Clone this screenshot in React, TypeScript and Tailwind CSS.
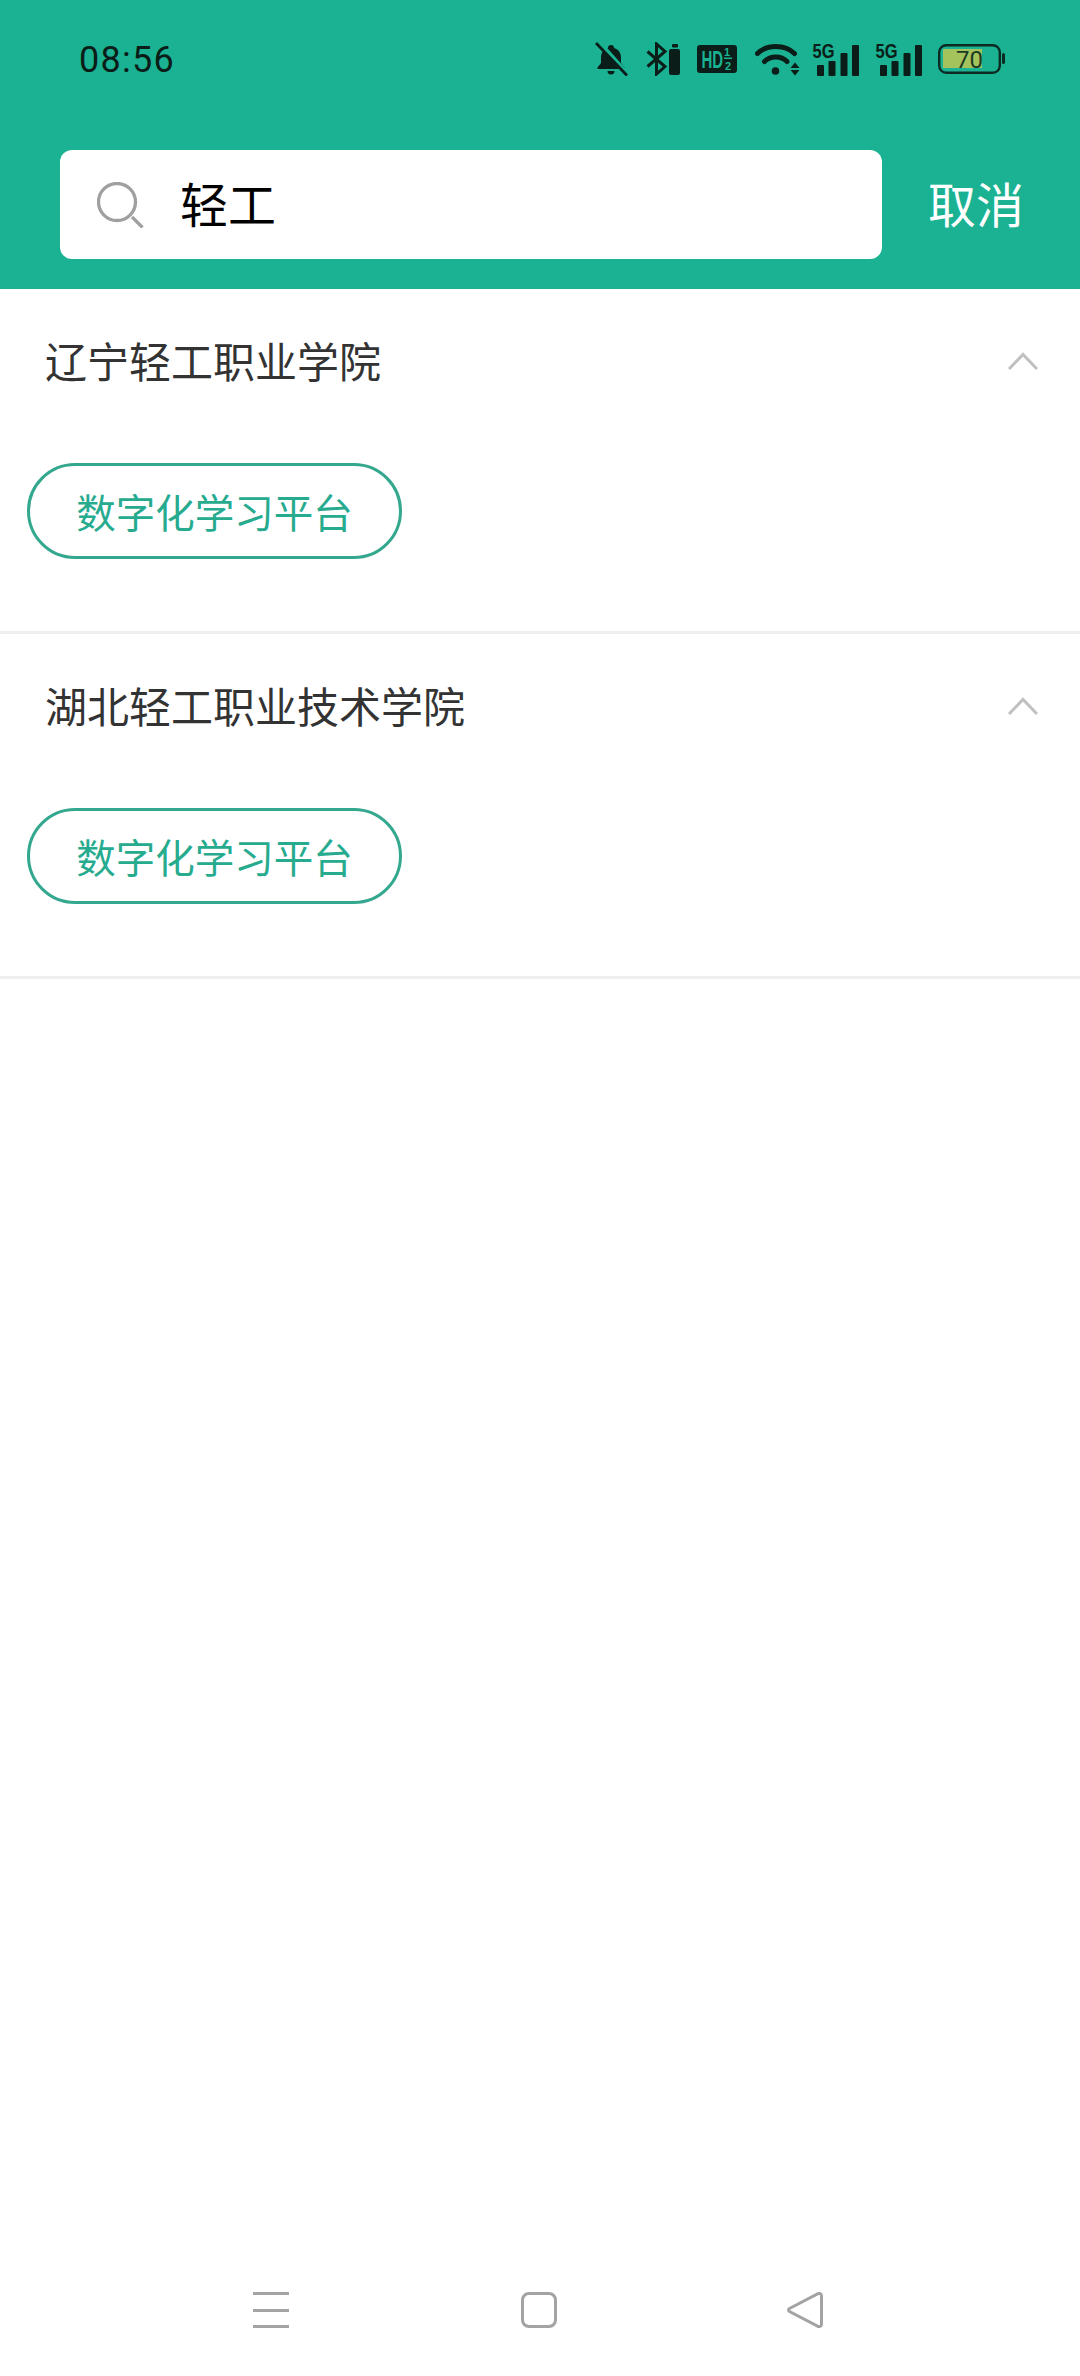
import React from "react";

const cjk = { fontFamily: '"Noto Sans CJK SC", "Noto Sans", sans-serif' };

function Bell() {
  return (
    <svg width="33" height="34" viewBox="0 0 33 34" className="block">
      <path d="M16 3a3 3 0 0 1 3 3c5 1.500 7 5 7 10v5l3.500 4.500V27H2.500v-1.500L6 21v-5c0-5 2-8.500 7-10a3 3 0 0 1 3-3z" fill="#0b1d18" />
      <path d="M12.500 29h7a3.500 3.500 0 0 1-7 0z" fill="#0b1d18" />
      <path d="M3.500 0L33 33" stroke="#1ab292" strokeWidth="5" />
      <path d="M1 1L32 33.500" stroke="#0b1d18" strokeWidth="2.800" />
    </svg>
  );
}

function BluetoothBattery() {
  return (
    <svg width="34" height="34" viewBox="0 0 34 34" className="block">
      <path d="M1.500 9.500L19 24.500l-8.500 7.500V2L19 9.500 1.500 24.500" fill="none" stroke="#0b1d18" strokeWidth="3" />
      <rect x="26" y="2" width="6" height="3.500" rx="1" fill="#0b1d18" />
      <rect x="23" y="7" width="11" height="26" rx="2" fill="#0b1d18" />
    </svg>
  );
}

function HD() {
  return (
    <svg width="40" height="28" viewBox="0 0 40 28" className="block overflow-visible">
      <rect x="0" y="0" width="40" height="28" rx="3" fill="#0b1d18" />
      <text transform="translate(4.500 23) scale(1 1.600)" fontFamily="Liberation Sans" fontWeight="700" fontSize="15" fill="#1ab292">HD</text>
      <text x="30" y="10.500" textAnchor="middle" fontFamily="Liberation Sans" fontWeight="700" fontSize="11" fill="#1ab292">1</text>
      <rect x="27" y="12.500" width="8" height="1.500" fill="#1ab292" />
      <text x="31" y="25" textAnchor="middle" fontFamily="Liberation Sans" fontWeight="700" fontSize="11" fill="#1ab292">2</text>
    </svg>
  );
}

function Wifi() {
  return (
    <svg width="45" height="34" viewBox="0 0 45 34" className="block">
      <path d="M2.500 11.500C12 2 30 2 39.500 11.500" fill="none" stroke="#0b1d18" strokeWidth="5" strokeLinecap="round" />
      <path d="M9.500 19.500C15.500 13.500 26 13.500 32 19.500" fill="none" stroke="#0b1d18" strokeWidth="5" strokeLinecap="round" />
      <circle cx="20.500" cy="29" r="3.800" fill="#0b1d18" />
      <path d="M35.500 26l4.500-5.500 4.500 5.500zM35.500 28h9L40 33.500z" fill="#0b1d18" />
    </svg>
  );
}

function Signal() {
  return (
    <svg width="48" height="33" viewBox="0 0 48 33" className="block overflow-visible">
      <text transform="translate(0.500 15) scale(1 1.270)" fontFamily="Liberation Sans" fontWeight="700" fontSize="16.500" fill="#0b1d18">5G</text>
      <rect x="5" y="22" width="7" height="11" rx="1" fill="#0b1d18" />
      <rect x="16.500" y="18" width="7" height="15" rx="1" fill="#0b1d18" />
      <rect x="28.500" y="10" width="7" height="23" rx="1" fill="#0b1d18" />
      <rect x="40" y="2" width="7" height="31" rx="1" fill="#0b1d18" />
    </svg>
  );
}

function Battery() {
  return (
    <svg width="67" height="30" viewBox="0 0 67 30" className="block overflow-visible">
      <rect x="5" y="5" width="39" height="19" fill="#a4c35d" />
      <rect x="1.200" y="1.200" width="60.600" height="27.600" rx="7" fill="none" stroke="#0b2a22" strokeWidth="2.400" />
      <rect x="64" y="9" width="3" height="11" rx="1.500" fill="#0b2a22" />
      <text x="18" y="24" fontFamily="Roboto" fontSize="24" fill="#1c3a24">70</text>
    </svg>
  );
}

function Chevron() {
  return (
    <svg width="30" height="18" viewBox="0 0 30 18" className="mt-[2px] block">
      <path d="M1 17L15 2.500 29 17" fill="none" stroke="#c0c0c0" strokeWidth="3" />
    </svg>
  );
}

function School({ name }: { name: string }) {
  return (
    <section className="h-[345px] border-b-[3px] border-[#eeeeee] bg-white">
      <div className="flex h-[142px] items-center justify-between pl-[45px] pr-[42px]">
        <h2 className="text-[42px] leading-[56px] font-normal text-[#333333]">{name}</h2>
        <Chevron />
      </div>
      <div className="pl-[27px] pt-[32px]">
        <div className="flex h-[96px] w-[375px] items-center justify-center rounded-[48px] border-[3px] border-[#33a88e] text-[39.500px] leading-[52px] text-[#27ab8f]">
          数字化学习平台
        </div>
      </div>
    </section>
  );
}

export default function App() {
  return (
    <div className="flex min-h-screen flex-col bg-white" style={cjk}>
      <header className="h-[289px] bg-[#1ab292]">
        <div className="flex h-[150px] items-start justify-between pl-[79px] pr-[75px] pt-[42px]">
          <span className="text-[36px] leading-[36px] text-[#0b1d18] font-['Roboto',sans-serif] tracking-[1.3px]">08:56</span>
          <div className="flex items-center">
            <div className="mr-[18px]"><Bell /></div>
            <div className="mr-[17px]"><BluetoothBattery /></div>
            <div className="mr-[18px]"><HD /></div>
            <div className="mr-[12px]"><Wifi /></div>
            <div className="mr-[15px]"><Signal /></div>
            <div className="mr-[15px]"><Signal /></div>
            <Battery />
          </div>
        </div>
        <div className="flex items-center pl-[60px]">
          <div className="flex h-[109px] w-[822px] items-center rounded-[12px] bg-white pl-[37px]">
            <svg width="47" height="46" viewBox="0 0 47 46" className="block">
              <circle cx="20" cy="20" r="18.500" fill="none" stroke="#a0a0a0" strokeWidth="3.300" />
              <path d="M35 35L45.500 45.500" stroke="#a0a0a0" strokeWidth="3.300" />
            </svg>
            <span className="ml-[36px] pb-[6px] text-[48px] leading-[64px] text-black">轻工</span>
          </div>
          <span className="ml-[46px] pb-[6px] text-[48px] leading-[64px] text-white">取消</span>
        </div>
      </header>

      <main className="flex-1">
        <School name="辽宁轻工职业学院" />
        <School name="湖北轻工职业技术学院" />
      </main>

      <nav className="flex h-[96px] items-start pl-[253px] pt-[12px]">
        <div className="flex h-[36px] w-[36px] flex-col justify-between">
          <div className="h-[3px] bg-[#a3a3a3]" />
          <div className="h-[3px] bg-[#a3a3a3]" />
          <div className="h-[3px] bg-[#a3a3a3]" />
        </div>
        <div className="ml-[232px] h-[36px] w-[36px] rounded-[8px] border-[3px] border-[#a3a3a3]" />
        <svg width="36" height="36" viewBox="0 0 36 36" className="ml-[230px] block">
          <path d="M2.500 16.500L30.500 1.800Q34.500 0.500 34.500 4V32Q34.500 35.500 30.500 34.200L2.500 19.500Q0.500 18 2.500 16.500z" fill="none" stroke="#a3a3a3" strokeWidth="3" />
        </svg>
      </nav>
    </div>
  );
}
